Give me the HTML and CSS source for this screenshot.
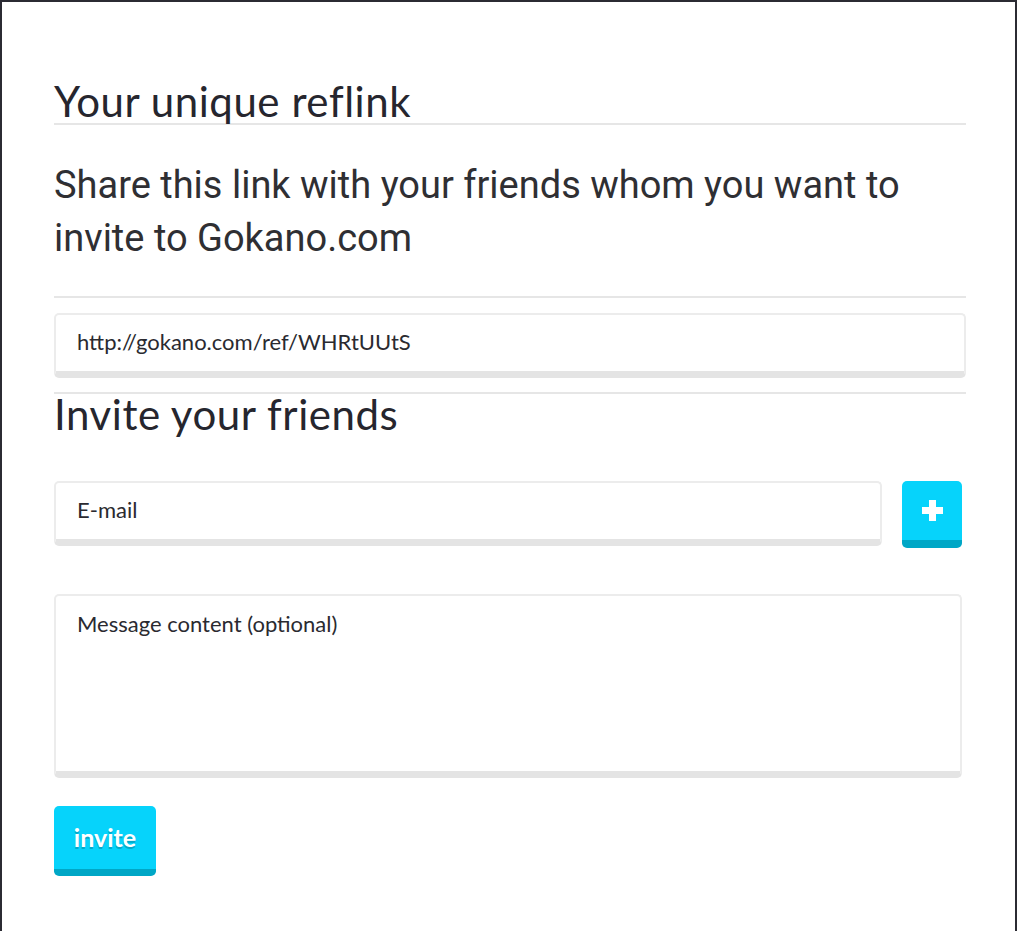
FILE: index.html
```html
<!DOCTYPE html>
<html>
<head>
<meta charset="utf-8">
<link rel="stylesheet" href="styles.css">
</head>
<body>
<div class="frame">
  <div class="content">
    <h2 class="title underlined">Your unique reflink</h2>
    <p class="lead">Share this link with your friends whom you want to invite to Gokano.com</p>
    <hr class="sep">
    <div class="field">http://gokano.com/ref/WHRtUUtS</div>
    <hr class="sep sep2">
    <h2 class="title invite-title">Invite your friends</h2>
    <div class="form">
      <div class="email-row">
        <div class="field email">E-mail</div>
        <button class="btn plus" aria-label="add">
          <svg width="21" height="21" viewBox="0 0 21 21"><path d="M7 0h7v7h7v7h-7v7H7v-7H0V7h7z" fill="#fff"/></svg>
        </button>
      </div>
      <div class="field message">Message content (optional)</div>
      <button class="btn invite">invite</button>
    </div>
  </div>
</div>
</body>
</html>
```
FILE: styles.css
```css
html, body {
  margin: 0;
  padding: 0;
  background: #fff;
}
.frame {
  box-sizing: border-box;
  min-height: 931px;
  border-top: 2px solid #2b2b33;
  border-left: 2px solid #2b2b33;
  border-right: 2px solid #2b2b33;
  color: #26262e;
}
.content {
  margin-left: 52px;
  width: 912px;
  padding-top: 77px;
}
.title {
  font-family: "Lato", "Open Sans", sans-serif;
  font-weight: 400;
  font-size: 42px;
  line-height: 44px;
  margin: 0;
  letter-spacing: 0.55px;
}
.underlined {
  border-bottom: 2px solid #e6e6e6;
}
.lead {
  font-family: "Roboto", sans-serif;
  font-size: 38px;
  line-height: 53px;
  margin: 34px 0 0;
  color: #2f2f33;
}
.sep {
  border: 0;
  border-top: 2px solid #e6e6e6;
  margin: 31px 0 0;
  height: 0;
}
.sep2 {
  margin-top: 14px;
}
.field {
  box-sizing: border-box;
  margin-top: 15px;
  height: 65px;
  border: 2px solid #ececec;
  border-bottom: 7px solid #e4e4e4;
  border-radius: 5px;
  padding: 0 21px;
  font-family: "Lato", "Open Sans", sans-serif;
  font-size: 22px;
  line-height: 54px;
  color: #2a2a30;
  background: #fff;
}
.invite-title {
  line-height: 40px;
}
.form {
  width: 908px;
  padding-top: 47px;
}
.email-row {
  display: flex;
  gap: 20px;
  align-items: flex-start;
}
.email-row .field {
  margin-top: 0;
  flex: 1;
}
.btn {
  border: 0;
  border-radius: 5px;
  background: #06d3fb;
  border-bottom: 8px solid #00a7c6;
  color: #fff;
  cursor: pointer;
  padding: 0;
  display: flex;
  align-items: center;
  justify-content: center;
}
.plus {
  width: 60px;
  height: 67px;
  flex: none;
}
.message {
  margin-top: 46px;
  height: 184px;
  line-height: 24px;
  padding-top: 16px;
}
.invite {
  margin-top: 28px;
  width: 102px;
  height: 70px;
  border-bottom-width: 7px;
  font-family: "Lato", "Open Sans", sans-serif;
  font-weight: 700;
  font-size: 25px;
  text-shadow: 0 2px 0 #03a9c9;
  padding-bottom: 2px;
}
```
